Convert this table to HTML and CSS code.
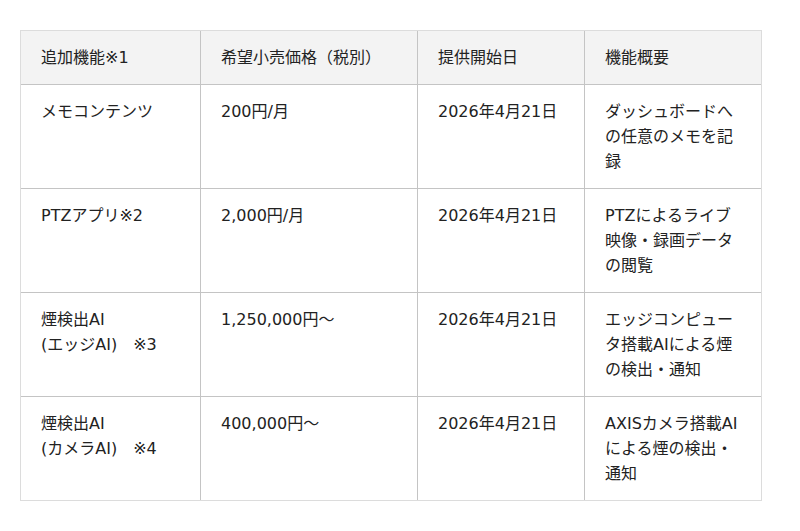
FILE: index.html
```html
<!DOCTYPE html>
<html lang="ja">
<head>
<meta charset="utf-8">
<link rel="stylesheet" href="styles.css">
</head>
<body>
<table class="spec">
  <colgroup>
    <col class="c1"><col class="c2"><col class="c3"><col class="c4">
  </colgroup>
  <thead>
    <tr><th>追加機能※1</th><th>希望小売価格（税別）</th><th>提供開始日</th><th>機能概要</th></tr>
  </thead>
  <tbody>
    <tr><td>メモコンテンツ</td><td>200円/月</td><td>2026年4月21日</td><td>ダッシュボードへの任意のメモを記録</td></tr>
    <tr><td>PTZアプリ※2</td><td>2,000円/月</td><td>2026年4月21日</td><td>PTZによるライブ映像・録画データの閲覧</td></tr>
    <tr><td>煙検出AI<br>(エッジAI)　※3</td><td>1,250,000円～</td><td>2026年4月21日</td><td>エッジコンピュータ搭載AIによる煙の検出・通知</td></tr>
    <tr><td>煙検出AI<br>(カメラAI)　※4</td><td>400,000円～</td><td>2026年4月21日</td><td>AXISカメラ搭載AIによる煙の検出・通知</td></tr>
  </tbody>
</table>
</body>
</html>
```
FILE: styles.css
```css
html, body {
  margin: 0;
  background: #fff;
}
body {
  padding: 30px 20px;
  font-family: "DejaVu Sans", "Noto Sans CJK JP", sans-serif;
  font-size: 16px;
  line-height: 25px;
  color: #222;
}
.spec {
  border-collapse: separate;
  border-spacing: 0;
  table-layout: fixed;
  width: 742px;
  border: 1px solid #dcdcdc;
}
.c1 { width: 179px; }
.c2 { width: 217px; }
.c3 { width: 167px; }
.c4 { width: 177px; }
.spec th, .spec td {
  text-align: left;
  vertical-align: top;
  font-weight: normal;
  padding: 14px 20px 14px 20px;
  border-left: 1px solid #c4c4c4;
  border-top: 1px solid #c4c4c4;
}
.spec th:first-child, .spec td:first-child {
  border-left: none;
  padding-left: 20px;
}
.spec thead th {
  border-top: none;
  background: #f3f3f3;
}
.spec tbody td {
  height: 75px;
}
```
